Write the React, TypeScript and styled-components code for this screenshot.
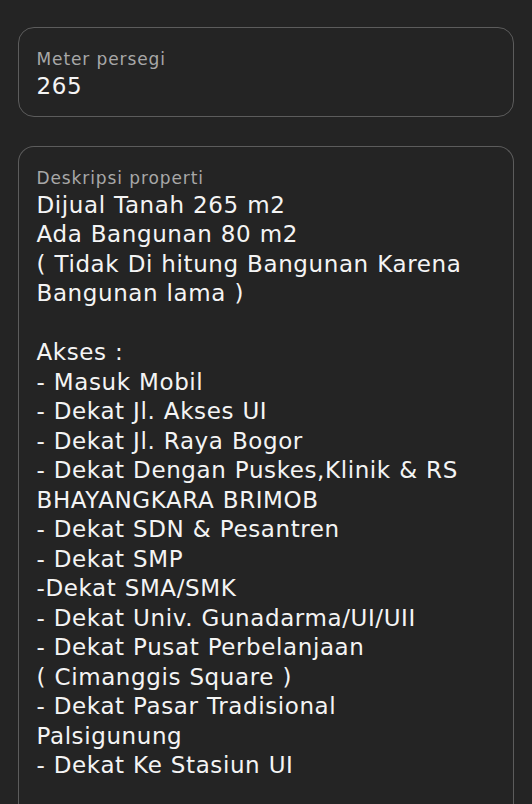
import React from "react";
import styled, { createGlobalStyle } from "styled-components";

const GlobalStyle = createGlobalStyle`
  html, body {
    margin: 0;
    padding: 0;
    background: #242424;
  }
  body {
    font-family: "DejaVu Sans", "Noto Sans", sans-serif;
    color: #f2f2f2;
  }
`;

const Page = styled.main`
  display: flex;
  flex-direction: column;
  gap: 29.5px;
  padding: 27px 18px 0 18px;
  height: 804px;
  box-sizing: border-box;
  overflow: hidden;
`;

const Field = styled.div<{ $open?: boolean }>`
  display: flex;
  flex-direction: column;
  border: 1.5px solid #5c5c5c;
  border-radius: 16px;
  padding: 20px 36px ${(p) => (p.$open ? "40px" : "14.5px")} 17.5px;
  ${(p) =>
    p.$open &&
    "border-bottom: none; border-bottom-left-radius: 0; border-bottom-right-radius: 0;"}
`;

const Label = styled.span`
  font-size: 17px;
  line-height: 22px;
  letter-spacing: 0.9px;
  color: #a8a8a8;
`;

const Value = styled.div`
  margin-top: 1.5px;
  font-size: 23px;
  line-height: 29.5px;
  letter-spacing: 0.6px;
  word-spacing: 0.5px;
  color: #f4f4f4;
  white-space: pre-wrap;
`;

const description = `Dijual Tanah 265 m2
Ada Bangunan 80 m2
( Tidak Di hitung Bangunan Karena Bangunan lama )

Akses :
- Masuk Mobil
- Dekat Jl. Akses UI
- Dekat Jl. Raya Bogor
- Dekat Dengan Puskes,Klinik & RS BHAYANGKARA BRIMOB
- Dekat SDN & Pesantren
- Dekat SMP
-Dekat SMA/SMK
- Dekat Univ. Gunadarma/UI/UII
- Dekat Pusat Perbelanjaan
( Cimanggis Square )
- Dekat Pasar Tradisional Palsigunung
- Dekat Ke Stasiun UI`;

export default function App() {
  return (
    <>
      <GlobalStyle />
      <Page>
        <Field>
          <Label>Meter persegi</Label>
          <Value>265</Value>
        </Field>
        <Field $open>
          <Label>Deskripsi properti</Label>
          <Value>{description}</Value>
        </Field>
      </Page>
    </>
  );
}
